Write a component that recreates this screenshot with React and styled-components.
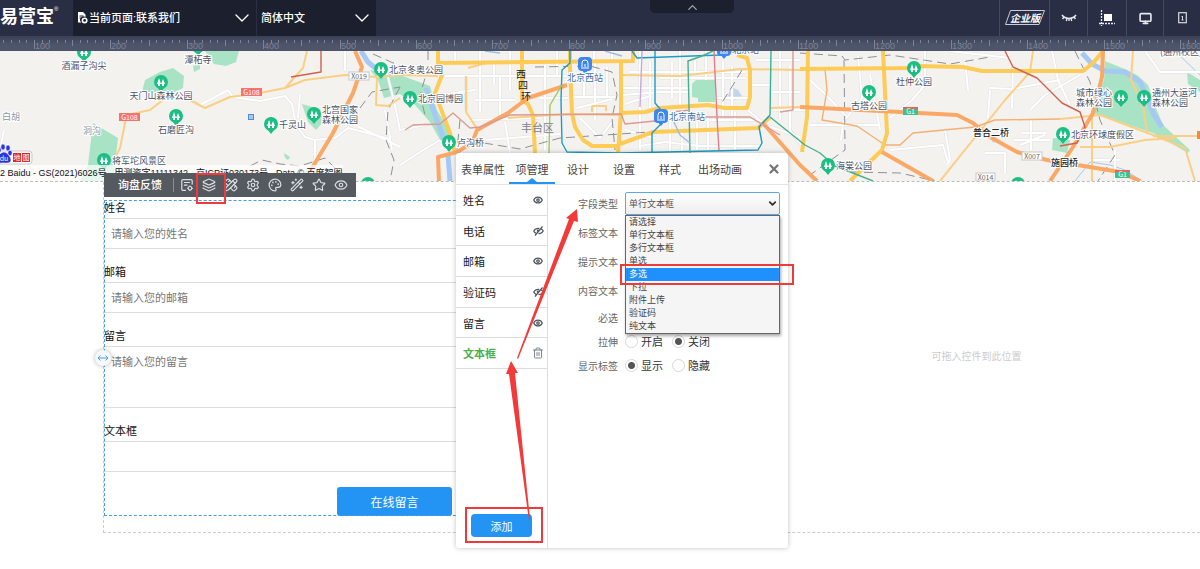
import React from "react";
import styled, { createGlobalStyle, css } from "styled-components";
import {
  ChevronDown,
  ChevronUp,
  Eye,
  Layers,
  Monitor,
  Palette,
  PencilRuler,
  Settings,
  Star,
  Trash2,
  WandSparkles,
  X,
} from "lucide-react";

const pageFont = `"Liberation Sans", "Noto Sans CJK SC", sans-serif`;

const rulerMarks = Array.from({ length: 157 }, (_, i) => i + 6);

const fields = [
  { id: "name", label: "姓名", placeholder: "请输入您的姓名" },
  { id: "email", label: "邮箱", placeholder: "请输入您的邮箱" },
  { id: "message", label: "留言", placeholder: "请输入您的留言", multiline: true },
  { id: "textbox", label: "文本框", placeholder: "" },
];

const tabs = ["表单属性", "项管理", "设计", "设置", "样式", "出场动画"];

const items = [
  { label: "姓名", icon: "eye" },
  { label: "电话", icon: "off" },
  { label: "邮箱", icon: "eye" },
  { label: "验证码", icon: "off" },
  { label: "留言", icon: "eye" },
  { label: "文本框", icon: "trash" },
];

const fieldTypes = [
  "请选择",
  "单行文本框",
  "多行文本框",
  "单选",
  "多选",
  "下拉",
  "附件上传",
  "验证码",
  "纯文本",
];

const FormIcon = ({ size }) => (
  <svg width={size} height={size} viewBox="0 0 14 14" fill="none" stroke="currentColor" strokeWidth="1.2">
    <path d="M6 12.400 H3 A1.200 1.200 0 0 1 1.800 11.200 V2.800 A1.200 1.200 0 0 1 3 1.600 H11 A1.200 1.200 0 0 1 12.200 2.800 V6.500 M4 4.500 H10 M4 7.200 H7.500" />
    <circle cx="10" cy="10.300" r="1.800" />
    <path d="M10 7.500 V8.500 M10 12.100 V13.100 M7.200 10.300 H8.200 M11.800 10.300 H12.800" />
  </svg>
);

const tools = [
  [FormIcon, "表单"],
  [Layers, "项管理"],
  [PencilRuler, "设计"],
  [Settings, "设置"],
  [Palette, "样式"],
  [WandSparkles, "动画"],
  [Star, "收藏"],
  [Eye, "显示"],
];

const whiteRoads = [
  "M188 100 L200 105 L228 90 L233 97 L260 101 L285 96 L292 104 L296 125 L305 137 L315 140 L335 138 L348 128 L390 139",
  "M345 51 V70 M300 95 L298 118 M315 140 V168 M345 120 L400 147 M385 110 L392 150",
  "M400 165 L420 152 L440 140 M400 130 L430 124",
  "M440 76 H570 M455 52 V62 M466 76 V110 M480 51 V112 M494 63 V84 M500 76 V118 M440 95 L475 90 M510 51 V90 M475 100 H515",
  "M505 122 L510 153 M545 65 V150 M557 51 V75 M470 120 L540 118 M540 98 H568 M486 140 L560 134",
  "M572 97 H615 M577 108 L612 99 M584 75 V98 M595 63 V120 M607 67 V96 M580 118 L600 138 L612 122 M594 51 V60 M612 51 V60 M640 51 V150",
  "M623 88 H690 M623 95 L660 92 H690 M650 62 V108 M630 72 H745 M660 78 H745 M672 62 V98 M680 51 V105 M625 104 L650 96",
  "M695 75 V60 M706 51 V80 M715 98 H748 M723 62 V118 M732 66 V118 M655 120 H760 M670 118 V153 M682 128 V153 M697 120 V150",
  "M708 118 V150 M735 112 V150 M748 110 L765 125 L800 137 M625 130 L655 138 M640 146 L665 142 L700 146 H760 M752 85 H770",
  "M770 92 H800 M780 51 V120 M790 65 V135 M756 60 H800 M775 110 H806 M790 130 L805 150",
  "M810 80 L826 95 L846 116 M858 56 L862 98 L843 122 L841 140 M810 125 H880 M925 51 V85 L912 100 L890 118 M870 75 L880 130",
  "M890 150 L943 145 L948 162 M945 130 L950 160 L947 165 M965 60 L968 90 M950 51 L1010 58",
  "M990 90 L988 118 M1013 65 L1012 108 M990 88 L1012 89 L1060 80 M1031 120 V150 M1014 140 H1050 M1022 133 H1046 M1020 145 L1045 135 M985 153 H1005 V173",
  "M1052 51 L1058 80 L1070 105 M1030 110 L1045 95 L1080 75 M1115 150 V181 M1145 51 L1160 72 H1200 M1090 160 H1120",
  "M0 150 L4 130 M385 65 L396 110 L400 130",
];

const majorRoads = [
  "M438 51 V63 L633 61 V51",
  "M438 63 L442 75 L435 93 L450 133 L455 153",
  "M522 51 V100 L528 104 L533 115 L535 153",
  "M570 51 V67 L572 113 L575 127 L583 140 L592 146 H617",
  "M621 62 V112 L618 153",
  "M621 113 L645 112 L660 108 L708 105 L725 108 H747 L750 97 V70 L747 58 L737 55",
  "M620 144 L653 132 L758 128 L770 117",
  "M808 51 L807 117 L802 152",
  "M800 69 L907 68 L917 66 L963 67 L982 71 H1083 L1093 63 L1103 51",
  "M883 51 L887 133 L882 150 L850 181",
];

const minorRoads = [
  "M114 160 L120 148 L125 123 L127 115 L150 110 L163 100",
  "M190 100 L205 108 L230 97 L260 93 L285 88 L305 80 L345 75 L377 77 L400 75 L438 76",
  "M285 88 L303 68 L307 51 M377 77 L376 105 L388 106 L400 98",
  "M466 76 V112 L478 130 M468 68 L490 62 M592 106 H606 V111 M592 106 V112",
  "M622 75 L680 76 L740 69 L800 70 M508 118 L567 114 L620 115",
  "M770 108 L800 107",
  "M1033 51 L1030 72 L1005 100 L985 125 L940 181",
  "M1060 119 L1100 115 L1153 135 L1185 148 L1195 181",
  "M1080 147 H1110 L1145 140 L1175 138 M1153 136 H1200",
  "M1133 51 L1131 80 L1143 105 L1147 133 M1092 110 V181",
];

const thinRoads = [
  "M825 69 L827 90 L822 120 L857 126 L885 145 L900 145 L913 133 L975 127 L995 120 L1060 119",
];

const highways = [
  "M355 51 L362 67 L353 93 L333 133 L312 168 L305 181",
  "M567 85 L528 98 L508 113 L477 130 L472 143 L457 152 L438 157 L439 181",
  "M762 122 L800 165 L817 181",
  "M882 152 L933 181",
  "M800 107 L900 112 L957 115 L973 123 L990 137 L1017 152 L1047 160 L1120 172 L1140 181",
  "M1103 51 L1102 77 L1093 113 L1073 147 L1050 181",
];

const railways = [
  "M373 54 L400 66 M360 108 L372 92 L400 87 M400 87 L388 110 L386 140 L394 160 L390 181",
  "M428 51 V68 L420 95 L425 115 M460 120 L457 150 M484 143 L520 149 L560 138 L650 132",
  "M535 67 L590 66 L612 72 L617 95 L612 118 L615 150 M742 70 L730 90 L721 104",
  "M800 53 L842 56 L845 60 L890 55 L950 64 L990 57 M844 60 L845 150 L810 175",
  "M1075 51 L1090 82 L1100 120 L1115 155 L1098 181 M850 172 L900 173 L935 181 M250 166 L262 160 L280 164 L300 166 L325 158 L335 168",
];

const subways = [
  ["#1e9cc4", "M570 51 V63 L562 70 L561 100 L562 143 L567 152 L620 153 L758 150 L762 143 L759 127 L770 115"],
  ["#38b29a", "M770 115 L771 51"],
  ["#1e9cc4", "M655 51 V103 L661 110 M661 124 L652 133 V153"],
  ["#1e9cc4", "M632 51 L637 58 L720 55 L734 51"],
  ["#45b08f", "M713 51 L702 56 L688 61 L690 153"],
  ["#dd7f8c", "M714 51 L717 117 L719 150"],
  ["#c9a9d6", "M642 51 L640 107"],
  ["#a5c85a", "M562 85 L550 105 L549 153"],
  ["#dc9a94", "M405 130 L413 125 L440 124 L453 113 L470 128 L480 127 L510 115 L621 114 L625 124 L655 121"],
  ["#dc9a94", "M672 112 L690 110 M705 117 L750 117 L780 135"],
  ["#dc9a94", "M793 51 V110 L780 112"],
  ["#45b08f", "M770 117 L790 133 L805 145 L820 153 L835 166 L873 181"],
  ["#9dbbe0", "M485 51 L500 53 M605 51 L622 56 M673 120 L680 135 L690 143"],
  ["#d2604e", "M1005 51 L1013 67 L1037 78 L1062 103 L1080 112 L1085 127 L1077 143 L1060 146"],
  ["#d2604e", "M321 51 V72 L291 77"],
];

const pins = [
  { x: 84, y: 52, label: "酒漏子沟尖", side: "bottom" },
  { x: 198, y: 46, label: "潭柘寺", side: "bottom" },
  { x: 161, y: 82, label: "天门山森林公园", side: "bottom" },
  { x: 176, y: 116, label: "石磨匠沟", side: "bottom" },
  { x: 104, y: 160, label: "将军坨风景区" },
  { x: 271, y: 124, label: "千灵山" },
  { x: 314, y: 114, label: "北宫国家", second: "森林公园" },
  { x: 381, y: 69, label: "北京冬奥公园" },
  { x: 410, y: 98, label: "北京园博园" },
  { x: 449, y: 142, label: "卢沟桥" },
  { x: 585, y: 64, label: "北京西站", side: "bottom", station: true },
  { x: 661, y: 116, label: "北京南站", station: true },
  { x: 724, y: 49, label: "北京站", station: true },
  { x: 914, y: 68, label: "杜仲公园", side: "bottom" },
  { x: 869, y: 92, label: "古塔公园", side: "bottom" },
  { x: 828, y: 165, label: "海棠公园" },
  { x: 1121, y: 97, label: "城市绿心", second: "森林公园", side: "left" },
  { x: 1144, y: 97, label: "通州大运河", second: "森林公园" },
  { x: 1063, y: 134, label: "北京环球度假区" },
  { x: 1018, y: 184, label: "" },
  { x: 368, y: 184, label: "" },
];

const shields = [
  { x: 241, y: 88, w: 21, text: "G108", kind: "red" },
  { x: 119, y: 113, w: 21, text: "G108", kind: "red" },
  { x: 349, y: 72, w: 20, text: "X019", kind: "white" },
  { x: 1022, y: 152, w: 20, text: "X007", kind: "white" },
  { x: 976, y: 173, w: 19, text: "X014", kind: "white" },
  { x: 903, y: 107, w: 15, text: "G1", kind: "green" },
  { x: 1115, y: 170, w: 15, text: "G1", kind: "green" },
];

const shieldFill = { red: "#f4736c", white: "#fff", green: "#3fc08f" };

const Pin = ({ x, y, label, second, side = "right", station }) => {
  const anchor = { bottom: "middle", left: "end", right: "start" }[side];
  const tx = { bottom: x, left: x - 9, right: x + 8 }[side];
  const ty = side === "bottom" ? y + 17 : y + 4;
  return (
    <g>
      <path
        d={`M${x - 4} ${y + 5} L${x} ${y + 10} L${x + 4} ${y + 5} Z`}
        fill={station ? "#3d86ee" : "#1cbf83"}
      />
      {station ? (
        <>
          <rect x={x - 7} y={y - 7} width="14" height="14" rx="4" fill="#3d86ee" />
          <path
            d={`M${x - 3} ${y + 3} V${y - 1} A3 3 0 0 1 ${x + 3} ${y - 1} V${y + 3} M${x - 4} ${y + 4} H${x + 4} M${x} ${y} V${y + 3}`}
            fill="none"
            stroke="#fff"
          />
        </>
      ) : (
        <>
          <circle cx={x} cy={y} r="7" fill="#1cbf83" />
          <path
            d={`M${x - 2} ${y - 4} L${x} ${y + 2} H${x - 4} Z M${x + 2} ${y - 3} L${x + 4} ${y + 2} H${x} Z M${x - 3} ${y + 2} h2 v2 h-2 Z M${x + 1} ${y + 2} h2 v2 h-2 Z`}
            fill="#fff"
          />
        </>
      )}
      {label && (
        <MapLabel x={tx} y={second ? ty - 5 : ty} textAnchor={anchor} $blue={station}>
          {label}
        </MapLabel>
      )}
      {second && (
        <MapLabel x={tx} y={ty + 5} textAnchor={anchor}>
          {second}
        </MapLabel>
      )}
    </g>
  );
};

const CityMap = () => (
  <MapSvg viewBox="0 51 1200 130" preserveAspectRatio="xMinYMin slice">
    <rect x="0" y="51" width="1200" height="130" fill="#f3f2ef" />
    <g fill="#a9e3c5">
      <path d="M142 92 L145 80 L160 72 L173 68 L184 76 L183 88 L170 94 Z" />
      <path d="M205 51 H239 L236 62 L226 66 L214 64 Z M193 66 L200 63 L200 69 L194 72 Z" />
      <path d="M93 123 L118 138 L115 165 L113 181 L80 181 L88 165 Z" />
      <path d="M302 104 L320 109 L323 122 L316 130 L308 122 Z M284 153 L290 157 L288 160 L285 158 Z" />
      <path d="M370 70 L400 75 L430 86 L437 110 L450 132 L453 140 L440 140 L430 122 L415 105 L400 94 L384 98 L378 80 Z" />
      <path d="M696 80 H715 V102 H698 V98 L692 97 V84 Z" />
      <path d="M1105 61 L1127 70 L1137 75 L1148 85 L1156 108 L1163 125 L1190 150 L1188 153 L1153 133 L1092 113 L1104 80 Z" />
      <path d="M1187 72 L1200 80 V92 L1188 84 Z M1053 138 L1070 140 L1067 153 L1052 150 Z" />
      <path d="M990 135 L997 138 L993 143 Z" />
    </g>
    <g fill="none" stroke="#a5c8f5" strokeWidth="5">
      <path d="M361 51 L368 62 L380 72 M426 88 L430 100 L436 118 L446 145 M448 155 L450 181" />
      <path d="M1082 53 L1092 64 L1105 71 L1125 72 L1140 82 L1146 95 L1154 115 L1162 127" />
      <path d="M1175 51 L1200 75 M1075 181 L1090 162 L1110 165 L1125 170 L1142 181" strokeWidth="1" />
    </g>
    <path d="M731 87 L738 90 L742 96 L735 100 L728 96 Z" fill="#c4d5ea" />
    <g fill="none" stroke="#e2e2e4" strokeWidth="3" strokeLinejoin="round">
      {whiteRoads.map((d) => (
        <path key={d} d={d} />
      ))}
    </g>
    <g fill="none" stroke="#fff" strokeWidth="2" strokeLinejoin="round">
      {whiteRoads.map((d) => (
        <path key={d} d={d} />
      ))}
    </g>
    <g fill="none" stroke="#8d9095" strokeWidth="1" strokeDasharray="9 5">
      {railways.map((d) => (
        <path key={d} d={d} />
      ))}
    </g>
    <g fill="none" stroke="#fbcf83" strokeWidth="2" strokeLinejoin="round">
      {minorRoads.map((d) => (
        <path key={d} d={d} />
      ))}
    </g>
    {thinRoads.map((d) => (
      <path key={d} d={d} fill="none" stroke="#f3b070" strokeWidth="1.4" strokeLinejoin="round" />
    ))}
    <g fill="none" stroke="#fdcb56" strokeWidth="4" strokeLinejoin="round">
      {majorRoads.map((d) => (
        <path key={d} d={d} />
      ))}
    </g>
    <g fill="none" stroke="#fba867" strokeWidth="4" strokeLinejoin="round">
      {highways.map((d) => (
        <path key={d} d={d} />
      ))}
    </g>
    {subways.map(([color, d]) => (
      <path key={d} d={d} fill="none" stroke={color} strokeWidth="1.4" strokeLinejoin="round" />
    ))}
    {shields.map((s) => (
      <g key={s.x}>
        <rect
          x={s.x}
          y={s.y}
          width={s.w}
          height="8"
          fill={shieldFill[s.kind]}
          stroke={s.kind === "white" ? "#c8c8c8" : "none"}
        />
        {s.kind === "green" && <rect x={s.x} y={s.y} width={s.w} height="2" fill="#e9635c" />}
        <ShieldText x={s.x + s.w / 2} y={s.y + 7} $dark={s.kind === "white"}>
          {s.text}
        </ShieldText>
      </g>
    ))}
    <rect x="248" y="114" width="6" height="6" fill="#4a90d9" />
    <path d="M249 116 H253 M249 118 H253" stroke="#fff" strokeWidth="1" />
    <rect x="1197" y="131" width="3" height="8" fill="#f08a3c" />
    {pins.map((p) => (
      <Pin key={`${p.x}-${p.y}`} {...p} />
    ))}
    <MapLabel x="2" y="120" $faint>白胡</MapLabel>
    <MapLabel x="83" y="134" $faint>洞沟</MapLabel>
    <MapLabel x="973" y="136" $dark>普合二桥</MapLabel>
    <MapLabel x="1051" y="166" $dark>施园桥</MapLabel>
    <MapLabel x="1160" y="55">(通州校区)</MapLabel>
    <District x="521" y="132">丰台区</District>
    <RoadName x="516" y="78">西</RoadName>
    <RoadName x="518" y="89">四</RoadName>
    <RoadName x="521" y="100">环</RoadName>
    <g>
      <rect x="-6" y="151" width="38" height="13" rx="3" fill="#fff" stroke="#c9c9c9" />
      <g fill="#2a32e0" stroke="#fff" strokeWidth="0.6">
        <ellipse cx="-1" cy="150" rx="2.2" ry="3" />
        <ellipse cx="3" cy="147" rx="2.2" ry="3" />
        <ellipse cx="8" cy="148" rx="2.2" ry="3" />
        <ellipse cx="10" cy="153" rx="2.2" ry="2.8" />
        <path d="M-4 161 C-4 157 1 152 4 152 C7 152 11 157 11 160 C11 164 6 163 3 163 C0 163 -4 164 -4 161 Z" />
      </g>
      <rect x="13" y="153" width="8" height="9" fill="#e02525" />
      <rect x="22" y="153" width="8" height="9" fill="#e02525" />
      <ShieldText x="4" y="161">du</ShieldText>
      <ShieldText x="17" y="160">地</ShieldText>
      <ShieldText x="26" y="160">图</ShieldText>
    </g>
  </MapSvg>
);

const Header = () => (
  <TopBar>
    <Logo>
      易营宝<sup>®</sup>
    </Logo>
    <HeaderSelect $width={183} $icon>
      <svg width="11" height="12" viewBox="0 0 11 12">
        <path d="M1 0 H6 L8.500 2.500 V5 A3.300 3.300 0 0 0 4.500 10.500 H1 Z" fill="#fff" />
        <path d="M2.500 4 H6.500 M2.500 6 H5" stroke="#1c1f2d" />
        <circle cx="7.600" cy="8.400" r="2.200" fill="none" stroke="#fff" strokeWidth="1.600" />
      </svg>
      <select aria-label="当前页面" defaultValue="contact">
        <option value="contact">当前页面:联系我们</option>
      </select>
      <ChevronDown size={24} strokeWidth={1.4} />
    </HeaderSelect>
    <HeaderSelect $width={119}>
      <select aria-label="语言" defaultValue="zh">
        <option value="zh">简体中文</option>
      </select>
      <ChevronDown size={24} strokeWidth={1.4} />
    </HeaderSelect>
    <PullTab aria-label="收起">
      <ChevronUp size={15} />
    </PullTab>
    <HeaderTools>
      <HeaderButton $width={50}>
        <svg width="40" height="16" viewBox="0 0 40 16">
          <path d="M5.500 .5 H39.500 L34 14.500 H.5 Z" fill="none" stroke="#c9ccd6" />
          <EditionText x="20" y="12">企业版</EditionText>
        </svg>
      </HeaderButton>
      <HeaderButton $width={38} aria-label="隐藏">
        <svg width="16" height="10" viewBox="0 0 16 10" fill="none" stroke="#e8eaf0" strokeWidth="1.4">
          <path d="M1 2 C4 6.500 12 6.500 15 2 M3 4 L1.500 6 M6 5.500 L5.300 8 M10 5.500 L10.700 8 M13 4 L14.500 6 M8 6 V8" />
        </svg>
      </HeaderButton>
      <HeaderButton $width={39} aria-label="对齐">
        <svg width="16" height="16" viewBox="0 0 16 16">
          <rect x="5" y="4" width="8" height="7" fill="#fff" />
          <path d="M2.500 0 V16 M0 13.500 H16" fill="none" stroke="#e8eaf0" strokeWidth="1.300" strokeDasharray="2 1" />
        </svg>
      </HeaderButton>
      <HeaderButton $width={37} aria-label="电脑">
        <Monitor size={13} strokeWidth={3} />
      </HeaderButton>
      <HeaderButton $width={37} aria-label="手机">
        <svg width="9" height="12" viewBox="0 0 9 12" fill="none" stroke="#d5d8e0">
          <rect x=".7" y=".7" width="7.600" height="10" strokeWidth="1.200" />
          <path d="M4.500 4 V8 M3.500 4.500 H4.500 M3.500 8 H5.500" />
        </svg>
      </HeaderButton>
    </HeaderTools>
  </TopBar>
);

const Ruler = () => (
  <RulerBar>
    <svg width="100%" height="15">
      {rulerMarks.map((n) => {
        const x = Math.round((n - 10) * 7.64 + 34) + 0.5;
        return (
          <path
            key={n}
            d={n % 10 === 0 ? `M${x} 4 V13` : `M${x} 4 V${n % 5 === 0 ? 10 : 7}`}
            stroke="#7b8397"
            strokeWidth="1"
          />
        );
      })}
      {rulerMarks
        .filter((n) => n % 10 === 0)
        .map((n) => (
          <RulerText key={n} x={Math.round((n - 10) * 7.64 + 35)} y="13">
            {n * 10}
          </RulerText>
        ))}
    </svg>
  </RulerBar>
);

const ItemIcon = ({ type }) => {
  if (type === "trash") return <Trash2 size={12} color="#7c8592" />;
  if (type === "off") {
    return (
      <svg width="11" height="10" viewBox="0 0 11 10" fill="none" stroke="#4d5560" strokeWidth="1.2">
        <path d="M3 7.300 C1.800 6.700 1 5.600 .8 5 C1.500 3.500 3.300 2.300 5.500 2.300 L6.300 2.400 M8.200 3 C9.200 3.500 10 4.400 10.200 5 C9.500 6.500 7.700 7.700 5.500 7.700 M9.500 .5 L2 9.500 M5.500 3.800 A1.300 1.300 0 0 0 4.300 5.300" />
      </svg>
    );
  }
  return <Eye size={10} strokeWidth={3} color="#4d5560" />;
};

const SettingsPanel = () => (
  <Panel>
    <TabBar>
      {tabs.map((tab) => (
        <Tab key={tab} $active={tab === "项管理"}>
          {tab}
        </Tab>
      ))}
      <CloseButton aria-label="关闭">
        <X size={14} strokeWidth={4} />
      </CloseButton>
    </TabBar>
    <PanelBody>
      <Sidebar>
        <ItemList>
          {items.map((item) => (
            <Item key={item.label} $active={item.icon === "trash"}>
              {item.label}
              <IconButton aria-label={item.label}>
                <ItemIcon type={item.icon} />
              </IconButton>
            </Item>
          ))}
        </ItemList>
        <AddButton>添加</AddButton>
      </Sidebar>
      <Props>
        <PropRow>
          <label htmlFor="type">字段类型</label>
          <SelectWrap>
            <TypeSelect id="type" defaultValue="单行文本框">
              {fieldTypes.map((type) => (
                <option key={type}>{type}</option>
              ))}
            </TypeSelect>
            <ChevronDown size={11} strokeWidth={4} />
            <Dropdown>
              {fieldTypes.map((type) => (
                <Option key={type} $active={type === "多选"}>
                  {type}
                </Option>
              ))}
            </Dropdown>
          </SelectWrap>
        </PropRow>
        <PropRow>
          <label htmlFor="labelText">标签文本</label>
          <PropInput id="labelText" />
        </PropRow>
        <PropRow>
          <label htmlFor="hintText">提示文本</label>
          <PropInput id="hintText" />
        </PropRow>
        <PropRow>
          <label htmlFor="contentText">内容文本</label>
          <PropInput id="contentText" />
        </PropRow>
        <PropRow $short>
          <label htmlFor="required">必选</label>
          <input id="required" type="checkbox" />
        </PropRow>
        <PropRow $short>
          <span>拉伸</span>
          <RadioLabel>
            <Radio name="stretch" />
            开启
          </RadioLabel>
          <RadioLabel>
            <Radio name="stretch" defaultChecked />
            关闭
          </RadioLabel>
        </PropRow>
        <PropRow $short>
          <span>显示标签</span>
          <RadioLabel>
            <Radio name="showLabel" defaultChecked />
            显示
          </RadioLabel>
          <RadioLabel>
            <Radio name="showLabel" />
            隐藏
          </RadioLabel>
        </PropRow>
      </Props>
    </PanelBody>
  </Panel>
);

const App = () => {
  return (
    <>
      <GlobalStyle />
      <Header />
      <Ruler />
      <Stage>
        <MapSection>
          <CityMap />
          <Copyright>
            2 Baidu - GS(2021)6026号 - 甲测资字11111342 - 京ICP证030173号 - Data © 百度智图
          </Copyright>
        </MapSection>
        <Columns>
          <Column>
            <Form onSubmit={(e) => e.preventDefault()}>
              <Toolbar>
                <strong>询盘反馈</strong>
                {tools.map(([Icon, name]) => (
                  <ToolButton key={name} type="button" aria-label={name}>
                    <Icon size={14} strokeWidth={2} />
                  </ToolButton>
                ))}
              </Toolbar>
              {fields.map((field) => (
                <Field key={field.id}>
                  <label htmlFor={field.id}>{field.label}</label>
                  {field.multiline ? (
                    <TextArea id={field.id} placeholder={field.placeholder} />
                  ) : (
                    <TextInput id={field.id} placeholder={field.placeholder} />
                  )}
                </Field>
              ))}
              <Submit>在线留言</Submit>
              <Handle>
                <svg width="12" height="8" viewBox="0 0 12 8" fill="none" stroke="#4aa3ea">
                  <path d="M1 4 H11 M3.500 1.500 L1 4 L3.500 6.500 M8.500 1.500 L11 4 L8.500 6.500" />
                </svg>
              </Handle>
            </Form>
          </Column>
          <EmptyColumn>可拖入控件到此位置</EmptyColumn>
        </Columns>
        <SettingsPanel />
        <Marks width="600" height="380" viewBox="194 170 600 380">
          <g fill="none" stroke="#ee3a3a" strokeWidth="2">
            <rect x="197" y="174" width="28" height="29" />
            <rect x="466" y="508" width="76" height="34" />
            <rect x="621" y="265" width="172" height="19" />
          </g>
          <g fill="#f33a3a">
            <path d="M577 209 L578 222 L574 221 L518 359 L517 358 L569 219 L566 218 Z" />
            <path d="M511 361 L518 373 L515 373 L530 519 L529 521 L509 374 L506 374 Z" />
          </g>
        </Marks>
      </Stage>
    </>
  );
};

const GlobalStyle = createGlobalStyle`
  * {
    box-sizing: border-box;
  }

  body {
    margin: 0;
    background: #fff;
    color: #333;
    font-family: ${pageFont};
    font-size: 11px;
  }

  button,
  input,
  select,
  textarea {
    font-family: inherit;
    font-size: inherit;
    color: inherit;
  }

  button {
    padding: 0;
    border: 0;
    background: none;
    cursor: pointer;
  }
`;

const TopBar = styled.header`
  position: relative;
  display: flex;
  height: 36px;
  background: #2a2e45;
  color: #fff;
`;

const Logo = styled.div`
  width: 73px;
  font-size: 18px;
  font-weight: 700;
  line-height: 34px;
  white-space: nowrap;

  sup {
    font-size: 6px;
    font-weight: 400;
    line-height: 6px;
    vertical-align: 12px;
  }
`;

const HeaderSelect = styled.div`
  display: flex;
  align-items: center;
  width: ${(props) => props.$width}px;
  padding: 0 2px 0 4px;
  margin-right: 1px;
  background: #1c1f2d;

  select {
    flex: 1;
    min-width: 0;
    height: 24px;
    padding: 0 0 0 ${(props) => (props.$icon ? 1 : 0)}px;
    border: 0;
    appearance: none;
    background: none;
    color: #fff;
    font-weight: 500;
  }
`;

const PullTab = styled.button`
  position: absolute;
  top: 0;
  left: 650px;
  display: flex;
  justify-content: center;
  width: 84px;
  height: 13px;
  border-radius: 0 0 5px 5px;
  background: #1c1f2d;
  color: #a4a8b5;
`;

const HeaderTools = styled.div`
  display: flex;
  margin-left: auto;
`;

const HeaderButton = styled.button`
  display: flex;
  align-items: center;
  justify-content: center;
  width: ${(props) => props.$width}px;
  border-left: 1px solid #454a60;
  color: #e8eaf0;
`;

const EditionText = styled.text`
  fill: #fff;
  font-size: 10px;
  font-weight: 700;
  font-style: italic;
  text-anchor: middle;
`;

const RulerBar = styled.div`
  height: 15px;
  overflow: hidden;
  background: linear-gradient(#3a3f54, #4e556a 60%);

  svg {
    display: block;
  }
`;

const RulerText = styled.text`
  fill: #7b8397;
  font-size: 9px;
`;

const Stage = styled.main`
  position: relative;
  padding-bottom: 36px;
`;

const MapSection = styled.section`
  position: relative;
  height: 131px;
  border-bottom: 1px dashed #bbb;
`;

const MapSvg = styled.svg`
  display: block;
  width: 100%;
  height: 130px;
  font-family: "Noto Sans CJK SC", sans-serif;
`;

const MapLabel = styled.text`
  fill: ${(props) =>
    props.$blue ? "#3c6ea8" : props.$dark ? "#222" : props.$faint ? "#8f96a3" : "#4b5265"};
  font-size: 9px;
  font-weight: ${(props) => (props.$dark ? 500 : 400)};
  stroke: #fff;
  stroke-width: 2px;
  paint-order: stroke;
`;

const RoadName = styled.text`
  fill: #222;
  font-size: 10px;
`;

const District = styled.text`
  fill: #7f8490;
  font-size: 11px;
`;

const ShieldText = styled.text`
  fill: ${(props) => (props.$dark ? "#666" : "#fff")};
  font-size: 7px;
  text-anchor: middle;
`;

const Copyright = styled.p`
  position: absolute;
  left: 0;
  bottom: 0;
  margin: 0;
  background: rgba(255, 255, 255, 0.7);
  color: #111;
  font-size: 9px;
  line-height: 16px;
  white-space: nowrap;
`;

const Columns = styled.section`
  display: grid;
  grid-template-columns: 53% 47%;
  margin-left: 103px;
  border: 1px dashed #ccc;
  border-width: 0 0 1px 1px;
`;

const Column = styled.div`
  padding: 18px 0 16px;
`;

const EmptyColumn = styled.div`
  display: flex;
  align-items: center;
  justify-content: center;
  padding: 0 0 4px 68px;
  color: #ccc;
  font-size: 10px;
`;

const Form = styled.form`
  position: relative;
  display: flex;
  flex-direction: column;
  gap: 15px;
  outline: 1px dashed #4a9ae0;
  outline-offset: -1px;
`;

const Toolbar = styled.div`
  position: absolute;
  top: -27px;
  left: 0;
  z-index: 1;
  display: flex;
  align-items: center;
  height: 24px;
  padding: 0 4px 0 14px;
  background: #555a61;
  color: #fff;

  strong {
    padding-right: 11px;
    margin-right: 2px;
    border-right: 1px solid #8b8f95;
    font-weight: 500;
    line-height: 14px;
  }
`;

const ToolButton = styled.button`
  display: flex;
  justify-content: center;
  width: 22px;
  color: #dcdee1;
`;

const Field = styled.div`
  display: flex;
  flex-direction: column;

  label {
    color: #111;
    line-height: 17px;
    padding-bottom: 1px;
  }
`;

const inputStyle = css`
  width: 100%;
  padding: 0 7px;
  border: 1px solid #ddd;
  border-width: 1px 0;
  background: none;

  &::placeholder {
    color: #777;
  }
`;

const TextInput = styled.input`
  ${inputStyle}
  height: 31px;
`;

const TextArea = styled.textarea`
  ${inputStyle}
  display: block;
  height: 62px;
  padding-top: 6px;
  resize: none;
`;

const Submit = styled.button`
  align-self: center;
  width: 115px;
  height: 29px;
  border-radius: 3px;
  background: #2394f3;
  color: #fff;
  font-size: 12px;
`;

const Handle = styled.span`
  position: absolute;
  top: 50%;
  left: -9px;
  display: flex;
  align-items: center;
  justify-content: center;
  width: 16px;
  height: 16px;
  margin-top: -8px;
  border-radius: 8px;
  background: #f6f8fb;
  box-shadow: 0 0 4px rgba(0, 0, 0, 0.3);
`;

const Panel = styled.aside`
  position: absolute;
  top: 102px;
  left: 456px;
  z-index: 2;
  display: flex;
  flex-direction: column;
  width: 332px;
  height: 395px;
  border-radius: 3px;
  background: #fff;
  box-shadow: 0 0 5px rgba(0, 0, 0, 0.25);
`;

const TabBar = styled.nav`
  display: flex;
  height: 32px;
  border-bottom: 1px solid #e4e4e4;
`;

const Tab = styled.button`
  position: relative;
  min-width: 46px;
  padding: 0 5px;
  color: #444;

  &:first-child {
    padding-right: 4px;
  }

  ${(props) =>
    props.$active &&
    css`
      border-bottom: 2px solid #2394f3;
      padding-top: 2px;

      &::after {
        content: "";
        position: absolute;
        bottom: 0;
        left: 50%;
        margin-left: -5px;
        border: 5px solid transparent;
        border-top: 0;
        border-bottom: 4px solid #2394f3;
      }
    `}
`;

const CloseButton = styled.button`
  display: flex;
  align-items: center;
  margin: 0 7px 0 auto;
  color: #777;
`;

const PanelBody = styled.div`
  display: flex;
  flex: 1;
`;

const Sidebar = styled.div`
  display: flex;
  flex-direction: column;
  justify-content: space-between;
  width: 92px;
  border-right: 1px solid #ddd;
`;

const ItemList = styled.ul`
  display: flex;
  flex-direction: column;
  height: 184px;
  margin: 0;
  padding: 0;
  list-style: none;
`;

const Item = styled.li`
  display: flex;
  flex: 1;
  align-items: center;
  justify-content: space-between;
  padding: 0 2px 0 7px;
  border-bottom: 1px solid #ddd;
  color: ${(props) => (props.$active ? "#4caf50" : "#222")};
  font-weight: ${(props) => (props.$active ? 700 : 400)};
`;

const IconButton = styled.button`
  display: flex;
  justify-content: center;
  width: 14px;
`;

const AddButton = styled.button`
  width: 61px;
  height: 23px;
  margin: 0 0 11px 15px;
  border-radius: 4px;
  background: #2394f3;
  color: #fff;
`;

const Props = styled.div`
  flex: 1;
  padding: 4px 8px 0 0;
`;

const PropRow = styled.div`
  display: flex;
  align-items: center;
  height: ${(props) => (props.$short ? 24 : 29)}px;

  > label:first-child,
  > span:first-child {
    width: 70px;
    margin-right: 7px;
    color: #666;
    font-size: 10px;
    text-align: right;
  }
`;

const SelectWrap = styled.div`
  position: relative;
  flex: 1;

  > svg {
    position: absolute;
    top: 6px;
    right: 2px;
    color: #333;
    pointer-events: none;
  }
`;

const TypeSelect = styled.select`
  display: block;
  width: 100%;
  height: 23px;
  padding: 0 3px;
  border: 1px solid #5aa7ea;
  border-radius: 2px;
  appearance: none;
  background: linear-gradient(#fff, #ededed);
  color: #555;
  font-size: 9px;
`;

const Dropdown = styled.ul`
  position: absolute;
  top: 23px;
  left: 0;
  z-index: 1;
  width: 100%;
  margin: 0;
  padding: 0;
  border: 1px solid #666;
  background: #f5f5f5;
  box-shadow: 1px 2px 3px rgba(0, 0, 0, 0.35);
  list-style: none;
`;

const Option = styled.li`
  padding-left: 3px;
  background: ${(props) => (props.$active ? "#1e90ff" : "none")};
  color: ${(props) => (props.$active ? "#fff" : "#444")};
  font-size: 9px;
  line-height: 13px;
`;

const PropInput = styled.input`
  flex: 1;
  min-width: 0;
  height: 22px;
  border: 1px solid #ddd;
`;

const RadioLabel = styled.label`
  display: flex;
  align-items: center;
  gap: 3px;
  margin-right: 9px;
  color: #333;
`;

const Radio = styled.input.attrs({ type: "radio" })`
  width: 13px;
  height: 13px;
  margin: 0;
  border: 1px solid #d8d8d8;
  border-radius: 50%;
  appearance: none;

  &:checked {
    background: radial-gradient(#555 3px, #fff 4px);
  }
`;

const Marks = styled.svg`
  position: absolute;
  top: 119px;
  left: 194px;
  z-index: 3;
  pointer-events: none;
`;

export default App;
